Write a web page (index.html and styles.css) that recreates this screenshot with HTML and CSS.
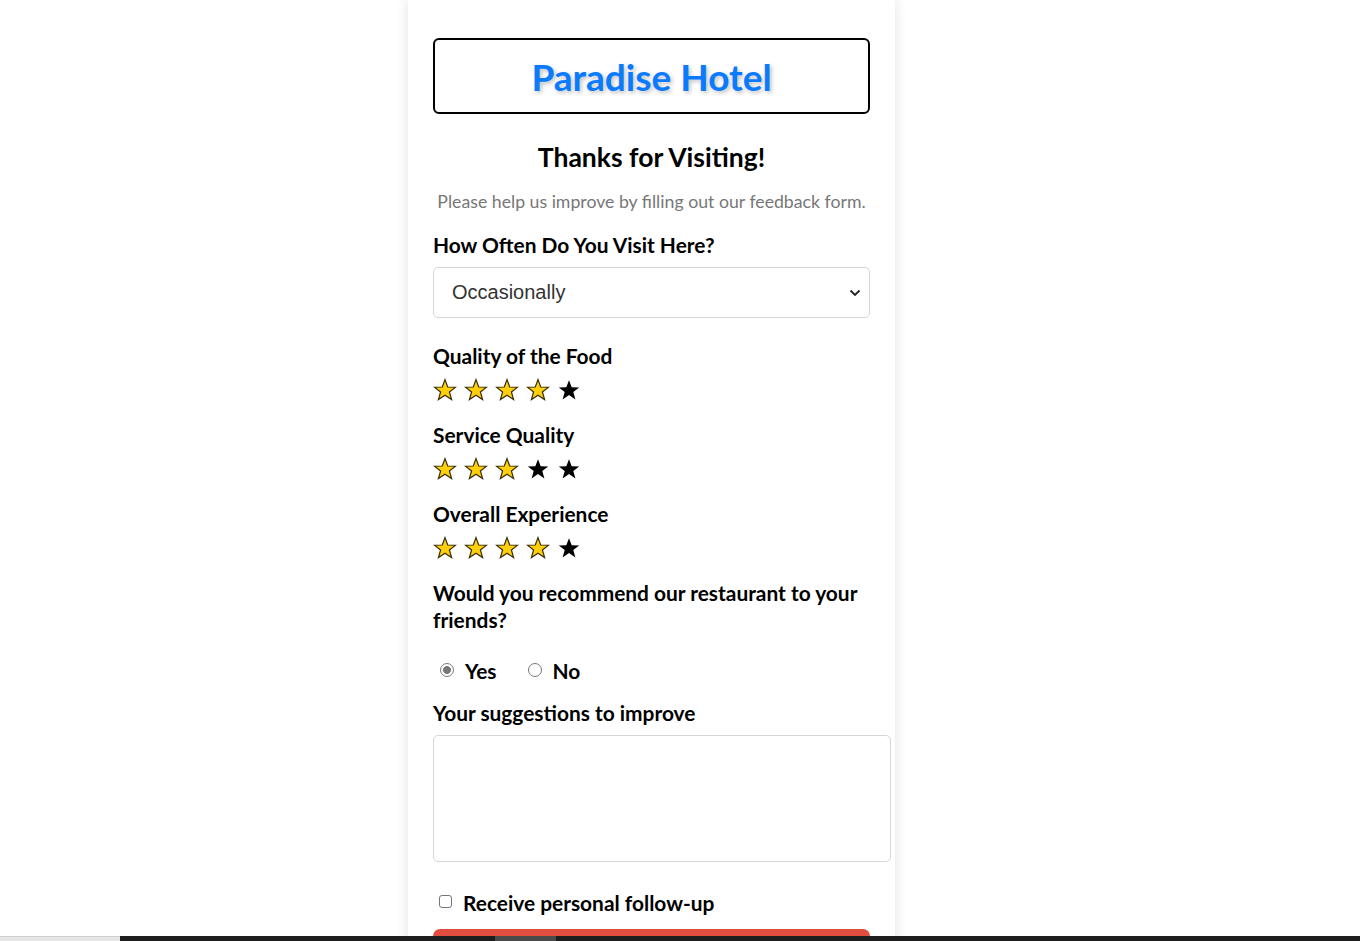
FILE: index.html
```html
<!DOCTYPE html>
<html lang="en">
<head>
<meta charset="utf-8">
<title>Paradise Hotel Feedback</title>
<link rel="stylesheet" href="styles.css">
</head>
<body>
<div class="card">
  <div class="brand"><h1 class="brand-title">Paradise Hotel</h1></div>
  <h2 class="thanks">Thanks for Visiting!</h2>
  <p class="intro">Please help us improve by filling out our feedback form.</p>

  <label class="label first">How Often Do You Visit Here?</label>
  <div class="select-box">
    <span class="select-text">Occasionally</span>
    <svg class="chev" width="12" height="8" viewBox="0 0 12 8"><path d="M1.5 1.5 L6 6 L10.5 1.5" fill="none" stroke="#222" stroke-width="1.8"/></svg>
  </div>

  <div class="label q1">Quality of the Food</div>
  <div class="stars">
    <svg class="star on" viewBox="0 0 24 24"><path d="M12 1.6 L14.7 9 L22.6 9.2 L16.4 14 L18.6 21.6 L12 17.2 L5.4 21.6 L7.6 14 L1.4 9.2 L9.3 9 Z"/></svg>
    <svg class="star on" viewBox="0 0 24 24"><path d="M12 1.6 L14.7 9 L22.6 9.2 L16.4 14 L18.6 21.6 L12 17.2 L5.4 21.6 L7.6 14 L1.4 9.2 L9.3 9 Z"/></svg>
    <svg class="star on" viewBox="0 0 24 24"><path d="M12 1.6 L14.7 9 L22.6 9.2 L16.4 14 L18.6 21.6 L12 17.2 L5.4 21.6 L7.6 14 L1.4 9.2 L9.3 9 Z"/></svg>
    <svg class="star on" viewBox="0 0 24 24"><path d="M12 1.6 L14.7 9 L22.6 9.2 L16.4 14 L18.6 21.6 L12 17.2 L5.4 21.6 L7.6 14 L1.4 9.2 L9.3 9 Z"/></svg>
    <svg class="star off" viewBox="0 0 24 24"><path d="M12 2.2 L14.7 9.2 L22.2 9.4 L16.3 14 L18.4 21.4 L12 17.1 L5.6 21.4 L7.7 14 L1.8 9.4 L9.3 9.2 Z"/></svg>
  </div>

  <div class="label q">Service Quality</div>
  <div class="stars">
    <svg class="star on" viewBox="0 0 24 24"><path d="M12 1.6 L14.7 9 L22.6 9.2 L16.4 14 L18.6 21.6 L12 17.2 L5.4 21.6 L7.6 14 L1.4 9.2 L9.3 9 Z"/></svg>
    <svg class="star on" viewBox="0 0 24 24"><path d="M12 1.6 L14.7 9 L22.6 9.2 L16.4 14 L18.6 21.6 L12 17.2 L5.4 21.6 L7.6 14 L1.4 9.2 L9.3 9 Z"/></svg>
    <svg class="star on" viewBox="0 0 24 24"><path d="M12 1.6 L14.7 9 L22.6 9.2 L16.4 14 L18.6 21.6 L12 17.2 L5.4 21.6 L7.6 14 L1.4 9.2 L9.3 9 Z"/></svg>
    <svg class="star off" viewBox="0 0 24 24"><path d="M12 2.2 L14.7 9.2 L22.2 9.4 L16.3 14 L18.4 21.4 L12 17.1 L5.6 21.4 L7.7 14 L1.8 9.4 L9.3 9.2 Z"/></svg>
    <svg class="star off" viewBox="0 0 24 24"><path d="M12 2.2 L14.7 9.2 L22.2 9.4 L16.3 14 L18.4 21.4 L12 17.1 L5.6 21.4 L7.7 14 L1.8 9.4 L9.3 9.2 Z"/></svg>
  </div>

  <div class="label q">Overall Experience</div>
  <div class="stars">
    <svg class="star on" viewBox="0 0 24 24"><path d="M12 1.6 L14.7 9 L22.6 9.2 L16.4 14 L18.6 21.6 L12 17.2 L5.4 21.6 L7.6 14 L1.4 9.2 L9.3 9 Z"/></svg>
    <svg class="star on" viewBox="0 0 24 24"><path d="M12 1.6 L14.7 9 L22.6 9.2 L16.4 14 L18.6 21.6 L12 17.2 L5.4 21.6 L7.6 14 L1.4 9.2 L9.3 9 Z"/></svg>
    <svg class="star on" viewBox="0 0 24 24"><path d="M12 1.6 L14.7 9 L22.6 9.2 L16.4 14 L18.6 21.6 L12 17.2 L5.4 21.6 L7.6 14 L1.4 9.2 L9.3 9 Z"/></svg>
    <svg class="star on" viewBox="0 0 24 24"><path d="M12 1.6 L14.7 9 L22.6 9.2 L16.4 14 L18.6 21.6 L12 17.2 L5.4 21.6 L7.6 14 L1.4 9.2 L9.3 9 Z"/></svg>
    <svg class="star off" viewBox="0 0 24 24"><path d="M12 2.2 L14.7 9.2 L22.2 9.4 L16.3 14 L18.4 21.4 L12 17.1 L5.6 21.4 L7.7 14 L1.8 9.4 L9.3 9.2 Z"/></svg>
  </div>

  <div class="label recommend">Would you recommend our restaurant to your friends?</div>
  <div class="radios">
    <label class="radio-opt"><input type="radio" name="rec" checked><span>Yes</span></label>
    <label class="radio-opt"><input type="radio" name="rec"><span>No</span></label>
  </div>

  <div class="label sugg">Your suggestions to improve</div>
  <textarea class="textarea"></textarea>

  <label class="check-row"><input type="checkbox"><span>Receive personal follow-up</span></label>
  <button class="submit" type="button">Submit</button>
</div>
<div class="taskbar"><div class="tb-left"></div><div class="tb-mid"></div></div>
</body>
</html>
```

FILE: styles.css
```css
html, body {
  margin: 0;
  padding: 0;
  background: #ffffff;
  overflow: hidden;
}
body {
  font-family: "Lato", "Open Sans", sans-serif;
  color: #000;
}
.card {
  width: 437px;
  margin-left: 408px;
  padding: 38px 25px 40px;
  background: #fff;
  box-shadow: 0 0 12px rgba(0, 0, 0, 0.12);
  display: flex;
  flex-direction: column;
  min-height: 960px;
}
.brand {
  border: 2px solid #000;
  border-radius: 6px;
  height: 72px;
  display: flex;
  align-items: center;
  justify-content: center;
}
.brand-title {
  margin: 0;
  font-size: 37px;
  font-weight: 700;
  color: #0a7bff;
  text-shadow: 2px 2px 4px rgba(0, 0, 0, 0.25);
  line-height: 40px;
  padding-top: 1px;
}
.thanks {
  margin: 28px 0 0;
  font-size: 26.5px;
  line-height: 30px;
  text-align: center;
  font-weight: 700;
}
.intro {
  margin: 19px 0 0;
  font-size: 17.7px;
  line-height: 22px;
  color: #777;
  text-align: center;
}
.label {
  display: block;
  font-size: 20.9px;
  line-height: 24px;
  font-weight: 700;
}
.label.first { margin-top: 20px; }
.label.q1 { margin-top: 26px; }
.label.q { margin-top: 19px; }
.label.recommend { margin-top: 17px; line-height: 27px; }
.label.sugg { margin-top: 18px; }
.select-box {
  margin-top: 10px;
  height: 49px;
  border: 1px solid #d6d6d6;
  border-radius: 5px;
  display: flex;
  align-items: center;
  justify-content: space-between;
  padding: 0 8px 0 18px;
}
.select-text {
  font-family: "Liberation Sans", Arial, sans-serif;
  font-size: 20px;
  color: #333;
}
.stars {
  margin-top: 8px;
  height: 28px;
  display: flex;
  align-items: center;
  gap: 7px;
}
.star {
  width: 24px;
  height: 24px;
  flex: none;
}
.star.on path {
  fill: #ffd00a;
  stroke: #3a2c00;
  stroke-width: 1.2;
  stroke-linejoin: miter;
}
.star.off path {
  fill: #000;
}
.radios {
  margin-top: 26px;
  height: 24px;
  display: flex;
  align-items: center;
  gap: 31px;
  padding-left: 7px;
}
.radio-opt {
  display: flex;
  align-items: center;
  gap: 11px;
  font-size: 20.9px;
  font-weight: 700;
  line-height: 24px;
}
.radio-opt input {
  appearance: none;
  -webkit-appearance: none;
  margin: 0;
  width: 14px;
  height: 14px;
  border: 1px solid #777;
  border-radius: 50%;
  background: #fff;
  position: relative;
  top: -1px;
}
.radio-opt input:checked {
  border-color: #7a7a7a;
  background: radial-gradient(circle, #777 0 3.6px, #fff 4.2px);
}
.textarea {
  margin-top: 10px;
  width: 458px;
  height: 127px;
  box-sizing: border-box;
  border: 1px solid #d6d6d6;
  border-radius: 5px;
  resize: none;
  padding: 8px;
  font-family: inherit;
  outline: none;
}
.check-row {
  margin-top: 29px;
  display: flex;
  align-items: center;
  gap: 11px;
  padding-left: 6px;
  font-size: 20.9px;
  font-weight: 700;
  line-height: 24px;
}
.check-row input {
  appearance: none;
  -webkit-appearance: none;
  margin: 0;
  width: 13px;
  height: 13px;
  border: 1px solid #767676;
  border-radius: 3px;
  position: relative;
  top: -2px;
  background: #fff;
}
.submit {
  margin-top: 14px;
  padding: 18px 0 16px;
  border: none;
  border-radius: 7px;
  background: #e14d3e;
  color: #fff;
  font-family: inherit;
  font-size: 20px;
  line-height: 24px;
  font-weight: 700;
}
.taskbar {
  position: fixed;
  left: 0;
  right: 0;
  bottom: 0;
  height: 5px;
  background: #1e1e1e;
  display: flex;
}
.tb-left {
  width: 120px;
  background: #e6e6e6;
  border-top: 1px solid #cfcfcf;
  box-sizing: border-box;
}
.tb-mid {
  width: 61px;
  margin-left: 375px;
  background: #4a4a4a;
}
```
